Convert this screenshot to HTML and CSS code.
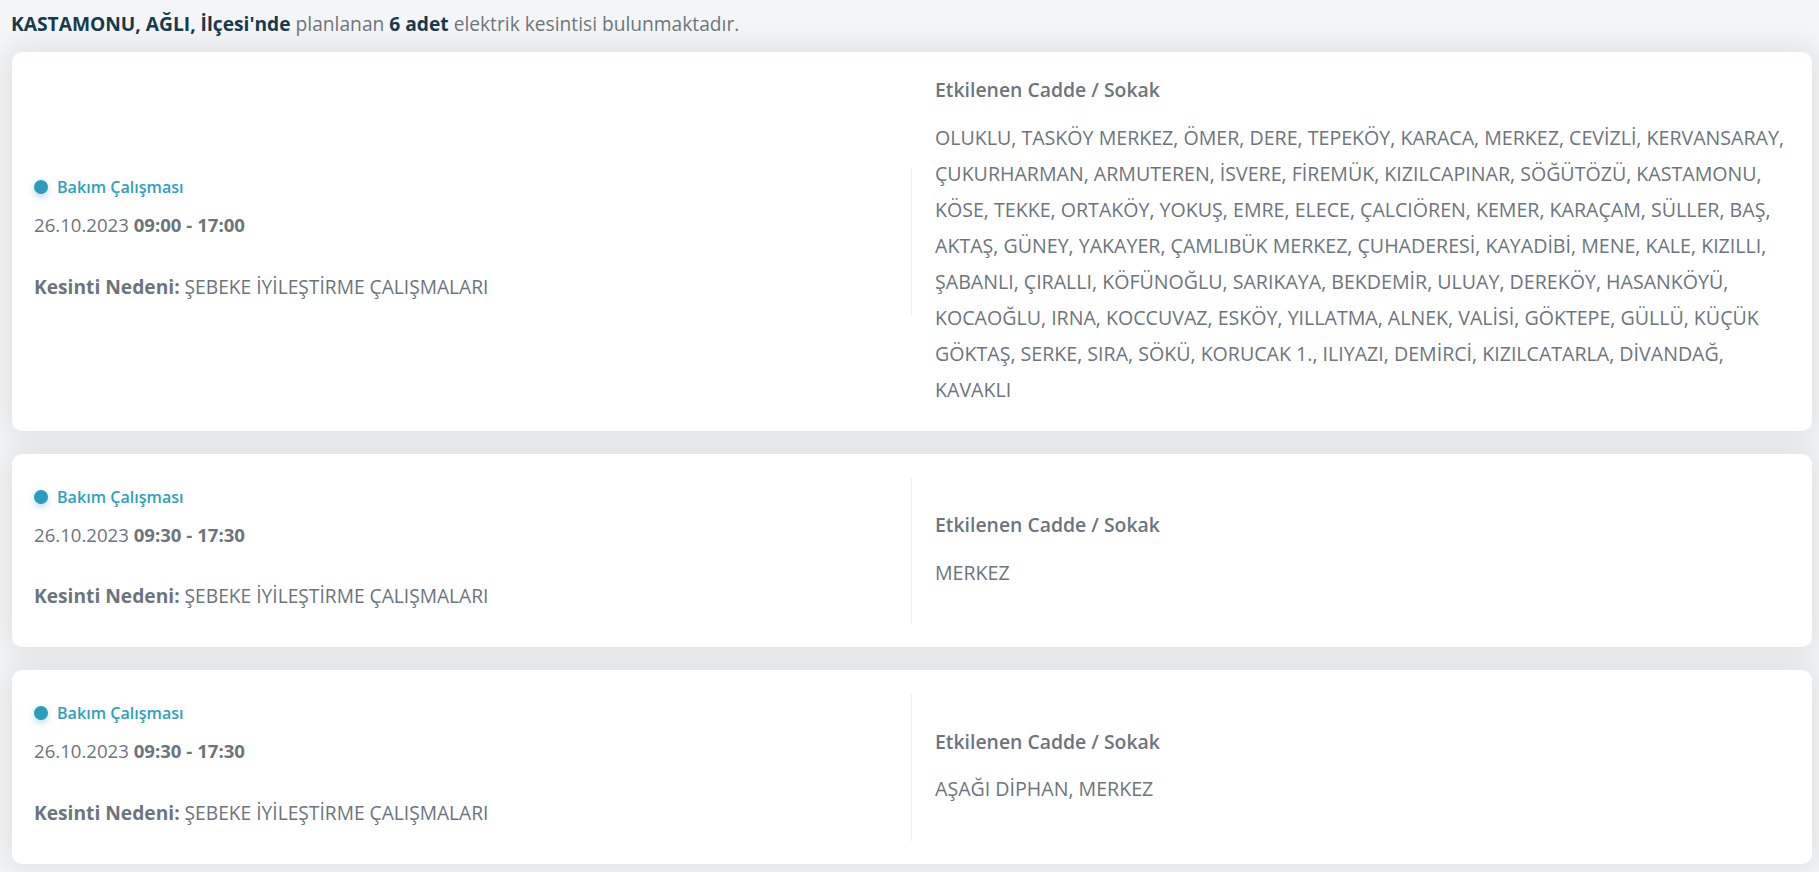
FILE: index.html
```html
<!DOCTYPE html>
<html lang="tr">
<head>
<meta charset="utf-8">
<title>Planlı Elektrik Kesintileri</title>
<link rel="stylesheet" href="styles.css">
</head>
<body>
<main class="page">
  <p class="summary"><strong>KASTAMONU, AĞLI, İlçesi'nde</strong> planlanan <strong>6 adet</strong> elektrik kesintisi bulunmaktadır.</p>

  <section class="outage">
    <div class="outage-info">
      <div class="badge"><span class="badge-dot"></span>Bakım Çalışması</div>
      <p class="outage-time">26.10.2023 <b>09:00 - 17:00</b></p>
      <p class="outage-reason"><b>Kesinti Nedeni:</b> ŞEBEKE İYİLEŞTİRME ÇALIŞMALARI</p>
    </div>
    <div class="outage-streets">
      <h3 class="streets-title">Etkilenen Cadde / Sokak</h3>
      <p class="streets-list">OLUKLU, TASKÖY MERKEZ, ÖMER, DERE, TEPEKÖY, KARACA, MERKEZ, CEVİZLİ, KERVANSARAY, ÇUKURHARMAN, ARMUTEREN, İSVERE, FİREMÜK, KIZILCAPINAR, SÖĞÜTÖZÜ, KASTAMONU, KÖSE, TEKKE, ORTAKÖY, YOKUŞ, EMRE, ELECE, ÇALCIÖREN, KEMER, KARAÇAM, SÜLLER, BAŞ, AKTAŞ, GÜNEY, YAKAYER, ÇAMLIBÜK MERKEZ, ÇUHADERESİ, KAYADİBİ, MENE, KALE, KIZILLI, ŞABANLI, ÇIRALLI, KÖFÜNOĞLU, SARIKAYA, BEKDEMİR, ULUAY, DEREKÖY, HASANKÖYÜ, KOCAOĞLU, IRNA, KOCCUVAZ, ESKÖY, YILLATMA, ALNEK, VALİSİ, GÖKTEPE, GÜLLÜ, KÜÇÜK GÖKTAŞ, SERKE, SIRA, SÖKÜ, KORUCAK 1., ILIYAZI, DEMİRCİ, KIZILCATARLA, DİVANDAĞ, KAVAKLI</p>
    </div>
  </section>

  <section class="outage">
    <div class="outage-info">
      <div class="badge"><span class="badge-dot"></span>Bakım Çalışması</div>
      <p class="outage-time">26.10.2023 <b>09:30 - 17:30</b></p>
      <p class="outage-reason"><b>Kesinti Nedeni:</b> ŞEBEKE İYİLEŞTİRME ÇALIŞMALARI</p>
    </div>
    <div class="outage-streets">
      <h3 class="streets-title">Etkilenen Cadde / Sokak</h3>
      <p class="streets-list">MERKEZ</p>
    </div>
  </section>

  <section class="outage">
    <div class="outage-info">
      <div class="badge"><span class="badge-dot"></span>Bakım Çalışması</div>
      <p class="outage-time">26.10.2023 <b>09:30 - 17:30</b></p>
      <p class="outage-reason"><b>Kesinti Nedeni:</b> ŞEBEKE İYİLEŞTİRME ÇALIŞMALARI</p>
    </div>
    <div class="outage-streets">
      <h3 class="streets-title">Etkilenen Cadde / Sokak</h3>
      <p class="streets-list">AŞAĞI DİPHAN, MERKEZ</p>
    </div>
  </section>
</main>
</body>
</html>
```

FILE: styles.css
```css
* {
  box-sizing: border-box;
}

html,
body {
  margin: 0;
  padding: 0;
}

body {
  background: #f4f5f7;
  font-family: "Open Sans", "Noto Sans", sans-serif;
  font-size: 19.2px;
  color: #6c757d;
}

.page {
  width: 1800px;
  margin-left: 12px;
  padding-top: 10px;
  padding-bottom: 20px;
}

.summary {
  margin: 0 0 13px -1px;
  line-height: 28.8px;
  color: #6c757d;
}

.summary strong {
  color: #173a4d;
  font-weight: 700;
}

/* one planned outage */
.outage {
  display: grid;
  grid-template-columns: 1fr 1fr;
  align-items: center;
  background: #fff;
  border-radius: 10px;
  padding: 24px 0 23px;
  margin-bottom: 23px;
  box-shadow: 0 0 26px 8px rgba(0, 0, 0, 0.07);
}

.outage-info {
  padding: 7px 0 13px 22px;
  border-right: 1px solid #ececec;
}

.badge {
  display: flex;
  align-items: center;
  gap: 9px;
  height: 24px;
  font-size: 16.1px;
  font-weight: 600;
  color: #2f9fc1;
}

.badge-dot {
  width: 14px;
  height: 14px;
  border-radius: 50%;
  background: #2b9cbf;
  box-shadow: 0 3px 7px rgba(43, 156, 191, 0.35);
}

.outage-time {
  margin: 12px 0 0;
  line-height: 28.8px;
  font-size: 18.6px;
}

.outage-time b,
.outage-reason b {
  font-weight: 700;
}

.outage-reason {
  margin: 33px 0 0;
  line-height: 28.8px;
}

.outage-streets {
  padding: 0 24px 0 23px;
}

.streets-title {
  margin: 0 0 15px;
  font-size: 19.4px;
  line-height: 28.8px;
  font-weight: 600;
  color: #6c757d;
}

.streets-list {
  margin: 0;
  font-size: 19.6px;
  line-height: 36px;
}
```
